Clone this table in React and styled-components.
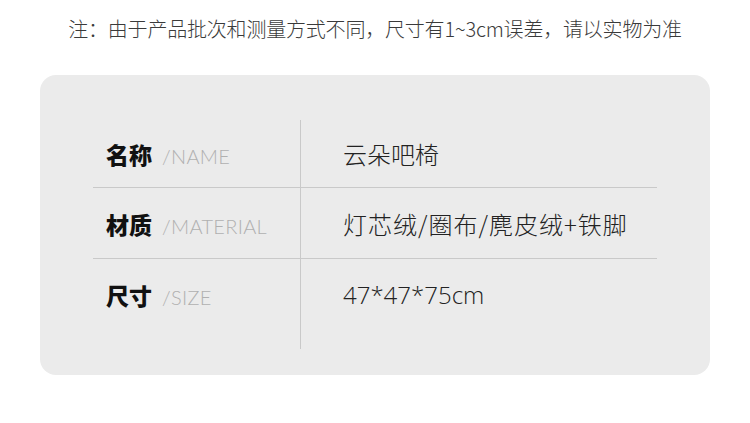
import styled, { createGlobalStyle } from "styled-components";

const Global = createGlobalStyle`
  html, body {
    margin: 0;
    padding: 0;
    background: #ffffff;
  }
  body {
    font-family: "Noto Sans CJK SC", "Noto Sans", sans-serif;
  }
`;

const Page = styled.div`
  width: 750px;
  height: 423px;
  background: #ffffff;
  display: flex;
  flex-direction: column;
  align-items: center;
`;

const Note = styled.div`
  margin-top: 15px;
  height: 28px;
  line-height: 28px;
  font-size: 20px;
  font-weight: 300;
  color: #3a3a3a;
  letter-spacing: -0.2px;
`;

const Card = styled.div`
  margin-top: 32px;
  width: 670px;
  height: 300px;
  box-sizing: border-box;
  background: #ebebeb;
  border-radius: 16px;
  padding: 45px 53px 0 53px;
`;

const Row = styled.div`
  display: grid;
  grid-template-columns: 207px 357px;
  height: ${(p) => p.$h}px;
  border-bottom: ${(p) => (p.$last ? "none" : "1px solid #c9c9c9")};
`;

const LabelCell = styled.div`
  display: flex;
  align-items: baseline;
  padding-left: 13px;
  padding-top: ${(p) => p.$top}px;
`;

const Label = styled.span`
  font-size: 23px;
  font-weight: 900;
  color: #111111;
  line-height: 24px;
`;

const Sub = styled.span`
  margin-left: 10px;
  font-family: Lato, "Open Sans", sans-serif;
  font-size: 20px;
  font-weight: 300;
  color: #b0b0b0;
  line-height: 24px;
  letter-spacing: 0.3px;
`;

const ValueCell = styled.div`
  border-left: 1px solid #c9c9c9;
  padding-left: 42px;
  padding-top: ${(p) => p.$top}px;
`;

const Value = styled.span`
  font-size: 24px;
  font-weight: 300;
  color: #222222;
  line-height: 24px;
  letter-spacing: ${(p) => p.$ls || 0}px;
  font-family: ${(p) => (p.$latin ? '"Open Sans", "Noto Sans CJK SC", sans-serif' : '"Noto Sans CJK SC", sans-serif')};
`;

const rows = [
  { zh: "名称", en: "/NAME", value: "云朵吧椅", h: 67, top: 22 },
  { zh: "材质", en: "/MATERIAL", value: "灯芯绒/圈布/麂皮绒+铁脚", h: 70, top: 24, ls: 1 },
  { zh: "尺寸", en: "/SIZE", value: "47*47*75cm", h: 90, top: 24, latin: true, last: true },
];

export default function App() {
  return (
    <Page>
      <Global />
      <Note>注：由于产品批次和测量方式不同，尺寸有1~3cm误差，请以实物为准</Note>
      <Card>
        {rows.map((r) => (
          <Row key={r.zh} $h={r.h} $last={r.last}>
            <LabelCell $top={r.top}>
              <Label>{r.zh}</Label>
              <Sub>{r.en}</Sub>
            </LabelCell>
            <ValueCell $top={r.top}>
              <Value $latin={r.latin} $ls={r.ls}>{r.value}</Value>
            </ValueCell>
          </Row>
        ))}
      </Card>
    </Page>
  );
}
